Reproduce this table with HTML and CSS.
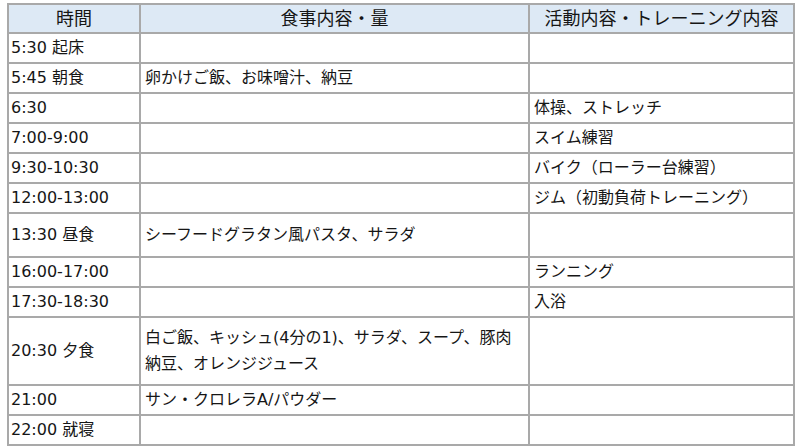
FILE: index.html
```html
<!DOCTYPE html>
<html lang="ja">
<head>
<meta charset="utf-8">
<link rel="stylesheet" href="styles.css">
</head>
<body>
<table class="schedule">
  <colgroup>
    <col class="c-time">
    <col class="c-meal">
    <col class="c-act">
  </colgroup>
  <thead>
    <tr class="head">
      <th>時間</th>
      <th>食事内容・量</th>
      <th>活動内容・トレーニング内容</th>
    </tr>
  </thead>
  <tbody>
    <tr><td>5:30 起床</td><td></td><td></td></tr>
    <tr><td>5:45 朝食</td><td>卵かけご飯、お味噌汁、納豆</td><td></td></tr>
    <tr><td>6:30</td><td></td><td>体操、ストレッチ</td></tr>
    <tr><td>7:00-9:00</td><td></td><td>スイム練習</td></tr>
    <tr><td>9:30-10:30</td><td></td><td>バイク（ローラー台練習）</td></tr>
    <tr><td>12:00-13:00</td><td></td><td>ジム（初動負荷トレーニング）</td></tr>
    <tr class="tall"><td>13:30 昼食</td><td>シーフードグラタン風パスタ、サラダ</td><td></td></tr>
    <tr><td>16:00-17:00</td><td></td><td>ランニング</td></tr>
    <tr><td>17:30-18:30</td><td></td><td>入浴</td></tr>
    <tr class="double"><td>20:30 夕食</td><td>白ご飯、キッシュ(4分の1)、サラダ、スープ、豚肉<br>納豆、オレンジジュース</td><td></td></tr>
    <tr><td>21:00</td><td>サン・クロレラA/パウダー</td><td></td></tr>
    <tr><td>22:00 就寝</td><td></td><td></td></tr>
  </tbody>
</table>
</body>
</html>
```

FILE: styles.css
```css
html, body {
  margin: 0;
  padding: 0;
  background: #ffffff;
}
body {
  padding: 3px 0 0 7px;
  font-family: "DejaVu Sans", "Noto Sans CJK JP", sans-serif;
  font-size: 16px;
  color: #161616;
}
.schedule {
  border-collapse: collapse;
  width: 786px;
  table-layout: fixed;
}
.c-time { width: 132px; }
.c-meal { width: 389px; }
.c-act { width: 265px; }
.schedule th,
.schedule td {
  border: 2px solid #a9a9a9;
  padding: 0 4px;
  height: 28px;
  line-height: 26px;
  vertical-align: middle;
  text-align: left;
  white-space: nowrap;
}
.schedule td:first-child {
  padding-left: 2px;
}
.schedule th {
  background: #dde9f5;
  font-weight: normal;
  text-align: center;
  font-size: 18px;
  height: 27px;
}
.schedule .tall td {
  height: 42px;
}
.schedule .double td {
  height: 66px;
}
```
